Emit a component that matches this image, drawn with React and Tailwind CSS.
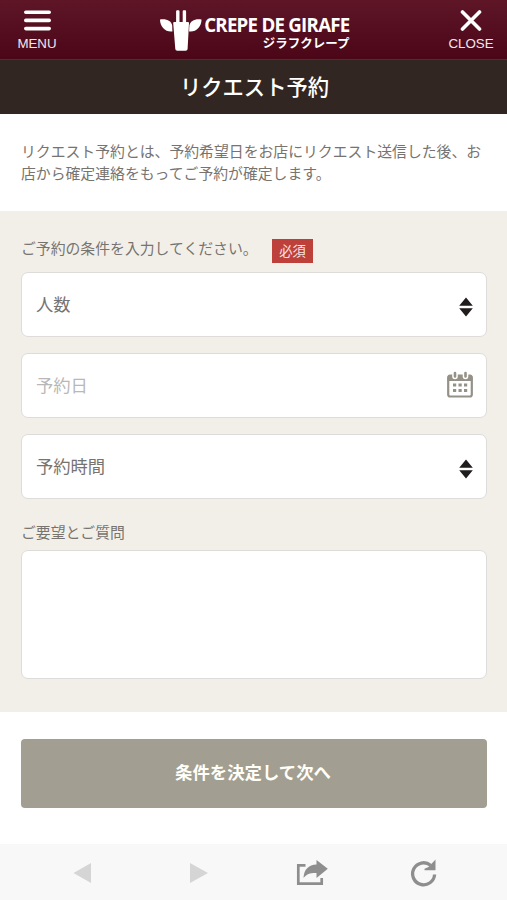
import { useState } from 'react'

const FIELD = 'flex w-full items-center justify-between rounded-[7px] border-[1.5px] border-[#dddcda] bg-white pl-[14px] pr-[13px] pb-[2px] text-[17.3px] h-[65px]'

function Logo() {
  return (
    <div className="flex w-[192px] pt-[8px]">
      <svg width="46" height="44" viewBox="0 0 46 44" fill="#fff" className="shrink-0">
        <path d="M14.200 15q0-1 1-1h1.900V3.200q0-1 1-1h1.400q1 0 1 1V14h3.200V3.200q0-1 1-1h1.400q1 0 1 1V14h1.900q1 0 1 1l-1.400 26q-.1 1.800-2 1.800h-8.300q-1.900 0-2-1.800z" />
        <path d="M1 11.500C7 10.300 12.600 12.800 13.200 17.500l.2 6C6.500 24.500 1 18.500 1 11.500z" />
        <path d="M42.500 11.500C36.500 10.300 31 12.800 30.400 17.500l-.3 6C37 24.500 42.500 18.500 42.500 11.500z" />
      </svg>
      <div className="flex w-[146px] flex-col items-end pt-[8px] font-bold whitespace-nowrap">
        <span className="mr-[1px] font-['Open_Sans',sans-serif] text-[18.700px] leading-[18px] tracking-[-0.75px]">CREPE DE GIRAFE</span>
        <span className="mr-[1px] font-['Noto_Sans_CJK_JP',sans-serif] text-[12.500px] leading-[17px]">ジラフクレープ</span>
      </div>
    </div>
  )
}

function SortArrows() {
  return (
    <svg width="14" height="20" viewBox="0 0 14 20" fill="#211d1c" className="mt-[6px]">
      <path d="M7 .5l6.800 8.200H.2zM7 19.500l6.800-8.200H.2z" />
    </svg>
  )
}

function CalendarIcon() {
  return (
    <svg width="26" height="27" viewBox="0 0 26 27" fill="none">
      <rect x="1.200" y="5" width="23.600" height="20.500" rx="2" stroke="#969187" strokeWidth="2.200" />
      <path d="M.5 6q0-2.500 2.500-2.500h20q2.500 0 2.500 2.500v4H.5z" fill="#969187" />
      <path d="M8 2.500v3M18.500 2.500v3" stroke="#fff" strokeWidth="5.600" strokeLinecap="round" />
      <path d="M8 2v3.500M18.500 2v3.500" stroke="#969187" strokeWidth="2.600" strokeLinecap="round" />
      <path d="M6 12.500h3.200v3H6zM11.500 12.500h3.200v3h-3.200zM17 12.500h3.200v3H17zM6 18h3.200v3H6zM11.500 18h3.200v3h-3.200zM17 18h3.200v3H17z" fill="#969187" />
    </svg>
  )
}

function Toolbar() {
  return (
    <nav className="flex h-[56px] items-center bg-[#f8f8f8] pl-[73px] pt-[2px]">
      <button type="button" aria-label="戻る">
        <svg width="18" height="20" viewBox="0 0 18 20" fill="#d5d5d5"><path d="M.5 10L18 0v20z" /></svg>
      </button>
      <button type="button" aria-label="進む" className="ml-[99px]">
        <svg width="18" height="20" viewBox="0 0 18 20" fill="#d5d5d5"><path d="M18 10L0 0v20z" /></svg>
      </button>
      <button type="button" aria-label="共有" className="ml-[88px]">
        <svg width="32" height="26" viewBox="0 0 32 26" fill="none">
          <path d="M9.500 5.400H2.300v18.200h23.400V18" stroke="#8e8e8e" strokeWidth="2.700" />
          <path d="M20.500 0L31.800 8.800 20.500 18v-5C14.500 12.800 10.500 14 7.500 18 8 9.500 12.500 5 20.500 4.600z" fill="#8e8e8e" />
        </svg>
      </button>
      <button type="button" aria-label="再読み込み" className="ml-[82px]">
        <svg width="27" height="28" viewBox="0 0 27 28" fill="none">
          <path d="M24.600 15.500A11 11 0 1 1 20.500 6.200" stroke="#8e8e8e" strokeWidth="3.300" />
          <path d="M25.500 .5V11.300H14.500V9.800L18.500 8z" fill="#8e8e8e" />
        </svg>
      </button>
    </nav>
  )
}

export default function App() {
  const [request, setRequest] = useState('')

  return (
    <div className="flex h-[900px] w-[507px] flex-col overflow-hidden bg-white font-['Noto_Sans_CJK_JP',sans-serif] text-[#77736e]">
      <header className="flex h-[60px] shrink-0 items-start justify-between border-b-[1.5px] border-[#652238] bg-linear-to-b from-[#5e1627] to-[#4b0618] text-white">
        <button type="button" className="flex w-[74px] flex-col items-center pt-[10px]">
          <svg width="27" height="21" viewBox="0 0 27 21" stroke="#fff" strokeWidth="3.600" strokeLinecap="round">
            <path d="M1.800 2.200h23.400M1.800 10.400h23.400M1.800 18.600h23.400" />
          </svg>
          <span className="mt-[6px] font-['Liberation_Sans',sans-serif] text-[13.300px] leading-[14px] text-[#f5e8ec]">MENU</span>
        </button>
        <Logo />
        <button type="button" className="flex w-[72px] flex-col items-center pt-[10px]">
          <svg width="22" height="21" viewBox="0 0 22 21" stroke="#fff" strokeWidth="3.600" strokeLinecap="round">
            <path d="M2.500 2l17 17M19.500 2L2.500 19" />
          </svg>
          <span className="mt-[6px] font-['Liberation_Sans',sans-serif] text-[13.300px] leading-[14px] text-[#f5e8ec]">CLOSE</span>
        </button>
      </header>

      <h1 className="flex h-[54px] shrink-0 items-center justify-center bg-[#322623] pb-[2px] pl-[2px] text-[21.300px] font-medium text-white">リクエスト予約</h1>

      <p className="h-[97px] shrink-0 pl-[21px] pr-[20px] pt-[26px] text-[14.850px] leading-[22px]">
        リクエスト予約とは、予約希望日をお店にリクエスト送信した後、お店から確定連絡をもってご予約が確定します。
      </p>

      <form className="flex h-[501px] shrink-0 flex-col bg-[#f2efe9] pl-[21px] pr-[20px]">
        <div className="flex h-[61px] items-start pt-[26px]">
          <span className="w-[238px] text-[14.850px] leading-[22px] whitespace-nowrap">ご予約の条件を入力してください。</span>
          <span className="ml-[13px] mt-[2px] flex h-[24px] w-[41px] items-center justify-center bg-[#bd403b] text-[13.300px] text-[#fbe5e1]">必須</span>
        </div>
        <div className="flex flex-col gap-[16px]">
          <button type="button" className={FIELD}>
            <span>人数</span>
            <SortArrows />
          </button>
          <button type="button" className={FIELD}>
            <span className="text-[#b8b8b8]">予約日</span>
            <CalendarIcon />
          </button>
          <button type="button" className={FIELD}>
            <span>予約時間</span>
            <SortArrows />
          </button>
        </div>
        <label htmlFor="request" className="mt-[22px] h-[29px] text-[14.850px] leading-[22px]">ご要望とご質問</label>
        <textarea
          id="request"
          value={request}
          onChange={(e) => setRequest(e.target.value)}
          className="h-[129px] w-full resize-none rounded-[7px] border-[1.5px] border-[#dddcda] bg-white p-3 outline-none"
        />
      </form>

      <div className="h-[132px] shrink-0 pl-[21px] pr-[21px] pt-[27px]">
        <button type="button" className="-mr-px h-[69px] w-[466px] rounded-[4px] bg-[#a29e91] pb-[2px] pr-[2px] text-[17.400px] font-bold text-[#fffef8]">条件を決定して次へ</button>
      </div>

      <Toolbar />
    </div>
  )
}
